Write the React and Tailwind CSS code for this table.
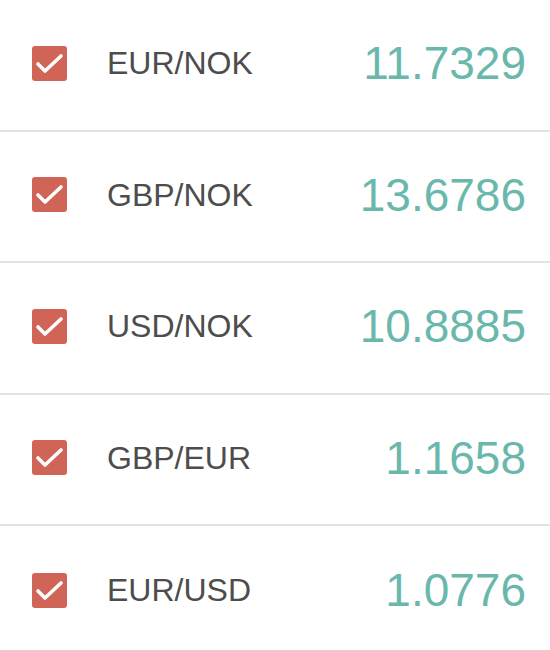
const rates = [
  { pair: 'EUR/NOK', value: '11.7329' },
  { pair: 'GBP/NOK', value: '13.6786' },
  { pair: 'USD/NOK', value: '10.8885' },
  { pair: 'GBP/EUR', value: '1.1658' },
  { pair: 'EUR/USD', value: '1.0776' },
];

const CheckBox = () => (
  <div className="w-[35px] h-[35px] rounded-[3px] bg-[#d06457] flex items-center justify-center shrink-0">
    <svg width="35" height="35" viewBox="0 0 35 35" fill="none">
      <path d="M6 18 L13 25 L29 10" stroke="#fff" strokeWidth="3.6" strokeLinecap="round" strokeLinejoin="round" />
    </svg>
  </div>
);

export default function App() {
  return (
    <div className="w-[550px] bg-white" style={{ fontFamily: '"Liberation Sans", Arial, sans-serif' }}>
      {rates.map((r, i) => (
        <div
          key={r.pair}
          className={`h-[131.5px] flex items-center pl-8 pr-6 pb-[3px] ${i < rates.length - 1 ? 'border-b-2 border-[#e3e3e3]' : ''}`}
        >
          <CheckBox />
          <span className="ml-10 text-[32px] text-[#4d4d4d] leading-none">{r.pair}</span>
          <span className="ml-auto text-[46px] text-[#6ab8ab] leading-none">{r.value}</span>
        </div>
      ))}
    </div>
  );
}
